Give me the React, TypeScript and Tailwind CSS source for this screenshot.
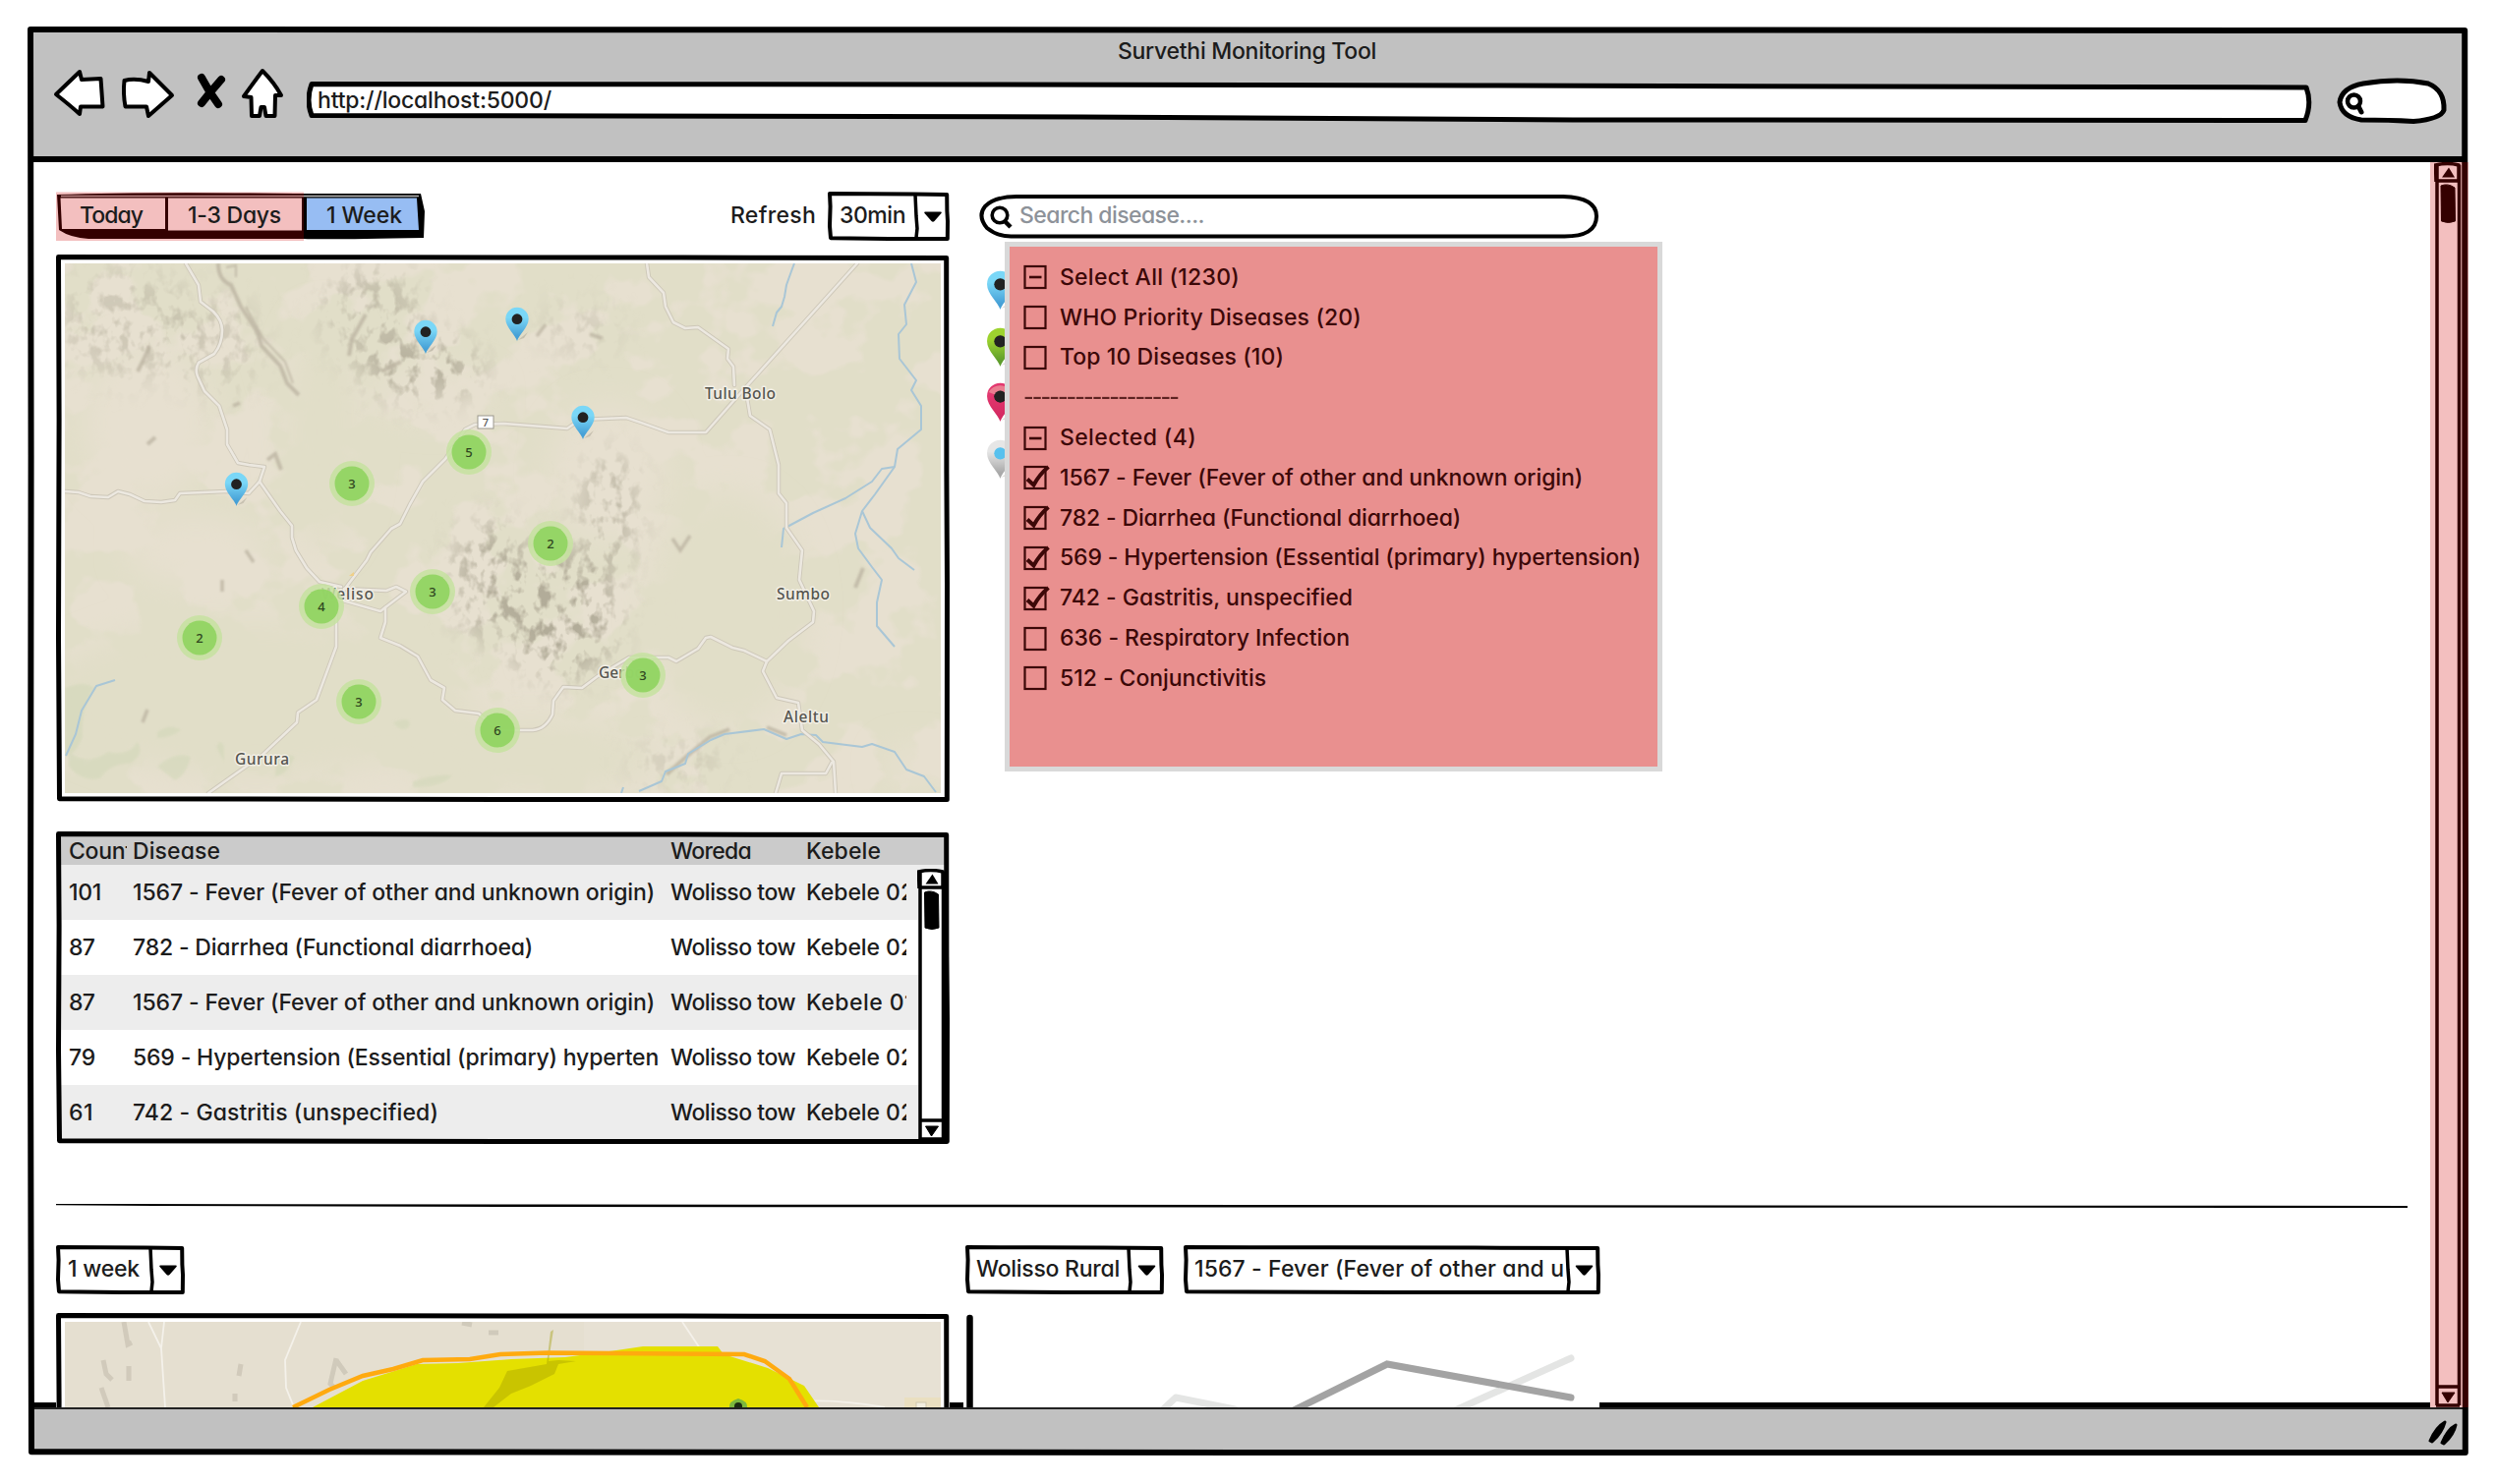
import React, { useLayoutEffect, useRef, useState } from "react";

/* Text whose tracking is adjusted so that it fills a known width. */
function Fit({ w, children, className = "" }: { w: number; children: string; className?: string }) {
  const ref = useRef<HTMLSpanElement>(null);
  const [ls, setLs] = useState(0);
  useLayoutEffect(() => {
    const el = ref.current;
    if (!el) return;
    el.style.letterSpacing = "0px";
    const natural = el.getBoundingClientRect().width;
    setLs((w - natural) / children.length);
  }, [w, children]);
  return (
    <span ref={ref} className={"inline-block whitespace-pre " + className} style={{ letterSpacing: `${ls}px` }}>
      {children}
    </span>
  );
}

/* Hand-drawn outline laid over a box of the given size. */
function Frame({ w, h, s = 5, fill = "none" }: { w: number; h: number; s?: number; fill?: string }) {
  const a = s / 2;
  const d = `M${a} ${a} L${w * 0.35} ${a + 0.3} L${w * 0.7} ${a + 0.6} L${w - a - 0.8} ${a + 1} L${w - a - 0.6} ${h * 0.4} L${w - a} ${h * 0.6} L${w - a - 0.2} ${h - a} L${w * 0.5} ${h - a} L${a + 1} ${h - a - 0.8} L${a} ${h * 0.7} L${a + 0.6} ${h * 0.3} Z`;
  return (
    <svg className="pointer-events-none absolute inset-0" width={w} height={h} viewBox={`0 0 ${w} ${h}`}>
      <path d={d} fill={fill} stroke="#000" strokeWidth={s} strokeLinejoin="round" />
    </svg>
  );
}

function Select({ w, h = 50, split, pad, text, tw }: { w: number; h?: number; split: number; pad: number; text: string; tw: number }) {
  return (
    <div className="relative shrink-0" style={{ width: w, height: h }}>
      <Frame w={w} h={h} s={4} fill="#fff" />
      <div className="relative flex h-[48px] items-center overflow-hidden" style={{ width: split - 2, paddingLeft: pad }}>
        <Fit w={tw}>{text}</Fit>
      </div>
      <svg className="absolute inset-0" width={w} height={h}>
        <path d={`M${split - 1} 3 L${split} ${h / 2} L${split + 1} ${h * 0.75} L${split} ${h - 3}`} fill="none" stroke="#000" strokeWidth="3.500" />
        <path d={`M${(split + w) / 2 - 8} 20.500 h16 q1.500 0 .5 1.500 l-7 8 q-1.500 1.500 -3 0 l-7 -8 q-1 -1.500 .5 -1.500z`} fill="#000" />
      </svg>
    </div>
  );
}

function Pin({ x, y, s = 1, c1 = "#7ad7f7", c2 = "#46a0d6", dot = "#222", id }: { x: number; y: number; s?: number; c1?: string; c2?: string; dot?: string; id: string }) {
  return (
    <g transform={`translate(${x} ${y}) scale(${s})`}>
      <defs>
        <linearGradient id={id} x1="0" y1="0" x2="0" y2="1">
          <stop offset="0.3" stopColor={c1} />
          <stop offset="0.85" stopColor={c2} />
        </linearGradient>
      </defs>
      <path d="M1 -1 L11 -9 L7 -3Z" fill="#8f8a7c" opacity=".35" />
      <path d="M0 0 C-1.500 -6 -11.700 -14 -11.700 -22.500 A11.700 11.700 0 0 1 11.700 -22.500 C11.700 -14 1.500 -6 0 0Z" fill={`url(#${id})`} />
      <circle cx="0" cy="-22.300" r="5.400" fill={dot} />
    </g>
  );
}

const roads = [
  "M189 268 L202 290 L204 307 L217 317 Q226 326 226 336 Q226 350 218 360 L202 369 Q198 376 201 383 L208 398 L223 413 L231 437 L231 452 L242 471 L253 473 L269 475 L264 490 L253 502 L230 500",
  "M66 500 L80 501 L92 505 L110 506 L120 500 L132 503 L147 510 L164 511 L178 509 L183 502 L230 500",
  "M264 490 L285 520 L297 535 L297 547 L301 560 L312 578 L325 592 L347 597",
  "M350 600 L373 570 L377 562 L398 538 L407 533 L417 513 L430 490 L453 467 L473 437 L483 432 L513 431 L577 436 L590 427 L637 425 L652 430 L680 440 L718 440 L755 398 L872 268",
  "M658 268 L660 282 L675 298 L677 312 L685 328 L697 334 L710 333 L741 355 L740 365 L746 373 L747 392",
  "M760 405 L763 423 L783 437 L792 473 L792 502 L800 512 L800 537 L816 560 L813 590 L828 622 L827 633 L802 652 L780 673 L776 683 L790 710 L812 715 L816 743 L833 757 L848 775 L850 807",
  "M846 776 L840 787 L795 787 L789 807",
  "M780 673 L757 662 L745 659 L723 648 L718 649 L710 660 L688 673 L680 669 L640 669 L608 688 L592 700 L573 699 L563 713 L562 727 Q555 742 542 743 L506 743 L487 726 L463 723 L450 712 L452 700 L438 692 L425 668 L407 657 L387 649 L392 633 L392 618 L413 602 L403 597 L393 601 L350 599",
  "M345 610 L387 622 L392 618",
  "M342 615 L342 658 L322 712 L303 725 L302 735 L267 768 L212 807",
];

const rivers = [
  "M808 268 L805 276 L800 290 L798 302 L795 312 L790 318 L786 332",
  "M927 268 L932 287 L920 310 L922 330 L914 340 L915 365 L932 387 L927 397 L937 413 L937 437 L913 457 L910 475 L890 503 L877 520 L870 543 L873 558 L887 577 L897 590 L892 613 L892 637 L910 658",
  "M910 475 L897 477 L887 490 L860 507 L827 522 L797 538 L795 557",
  "M877 520 L885 537 L907 558 L914 568 L930 580",
  "M632 807 L634 801 M650 805 L673 795 L677 785 L697 777 L700 767 L723 753 L737 747 L777 742 L800 752 L815 747 L830 748 L837 755 L877 760 L887 757 L910 765 L922 783 L940 790 L952 806",
  "M117 692 L98 698 L83 723 L77 747 L67 769",
];

const clusters: [number, number, string][] = [
  [477, 460, "5"], [358, 492, "3"], [560, 553, "2"], [440, 602, "3"], [327, 617, "4"],
  [203, 649, "2"], [365, 714, "3"], [506, 743, "6"], [654, 687, "3"],
];

const labels: [number, number, number, string][] = [
  [717, 406, 72, "Tulu Bolo"], [790, 610, 54, "Sumbo"], [327, 610, 53, "Weliso"],
  [609, 690, 46, "Gerbo"], [797, 735, 46, "Aleltu"], [239, 778, 55, "Gurura"],
];

function AreaMap() {
  return (
    <svg className="block" width="891" height="539" viewBox="66 268 891 539">
      <defs>
        <filter id="patches" x="0" y="0" width="100%" height="100%" colorInterpolationFilters="sRGB">
          <feTurbulence type="fractalNoise" baseFrequency="0.014 0.016" numOctaves="4" seed="11" />
          <feColorMatrix values="0 0 0 0 .906  0 0 0 0 .878  0 0 0 0 .816  12 0 0 0 -5.800" />
        </filter>
        <filter id="relief" x="0" y="0" width="100%" height="100%" colorInterpolationFilters="sRGB">
          <feTurbulence type="fractalNoise" baseFrequency="0.075 0.06" numOctaves="3" seed="4" />
          <feColorMatrix values="0 0 0 0 .7  0 0 0 0 .675  0 0 0 0 .6  5 0 0 0 -2.450" />
        </filter>
        <filter id="soft"><feGaussianBlur stdDeviation="16" /></filter>
        <filter id="soft2"><feGaussianBlur stdDeviation="1.200" /></filter>
        <mask id="hills">
          <g filter="url(#soft)" fill="#fff">
            <ellipse cx="130" cy="330" rx="70" ry="55" fillOpacity=".45" />
            <ellipse cx="220" cy="350" rx="45" ry="50" fillOpacity=".4" />
            <ellipse cx="380" cy="320" rx="50" ry="50" fillOpacity=".6" />
            <ellipse cx="430" cy="375" rx="60" ry="30" fillOpacity=".9" />
            <ellipse cx="570" cy="625" rx="60" ry="65" />
            <ellipse cx="500" cy="590" rx="40" ry="60" fillOpacity=".9" />
            <ellipse cx="620" cy="520" rx="30" ry="60" fillOpacity=".7" />
            <ellipse cx="590" cy="335" rx="40" ry="22" fillOpacity=".4" />
            <ellipse cx="690" cy="775" rx="50" ry="14" fillOpacity=".5" />
          </g>
        </mask>
      </defs>
      <rect x="66" y="268" width="891" height="539" fill="#e1dec8" />
      <rect x="66" y="268" width="891" height="539" filter="url(#patches)" />
      <g filter="url(#soft)" fill="#e7e0d0">
        <ellipse cx="150" cy="430" rx="65" ry="80" />
        <ellipse cx="200" cy="560" rx="70" ry="35" />
        <ellipse cx="440" cy="400" rx="60" ry="25" />
        <ellipse cx="620" cy="480" rx="60" ry="70" />
        <ellipse cx="930" cy="780" rx="30" ry="20" />
        <ellipse cx="260" cy="710" rx="220" ry="80" fill="#e1dec8" />
        <ellipse cx="740" cy="620" rx="80" ry="120" fill="#e1dec8" />
        <ellipse cx="540" cy="770" rx="130" ry="40" fill="#e1dec8" />
        <ellipse cx="330" cy="440" rx="40" ry="120" fill="#e1dec8" />
      </g>
      <g mask="url(#hills)"><rect x="66" y="268" width="891" height="539" filter="url(#relief)" /></g>
      <g fill="none" stroke="#b7af9d" filter="url(#soft2)" opacity=".7">
        <path d="M222 268 Q222 285 235 290 L245 312 L262 338 L266 352 L285 372 L292 390 L304 402" strokeWidth="4" />
        <path d="M230 272 L240 270 L240 282 M250 312 L268 345 L290 368 L298 390" strokeWidth="2" />
        <path d="M140 378 L148 362 L152 352 M150 452 L158 445 M237 413 L244 410 M272 468 L280 462 L286 478 M355 362 L358 345 L372 320 M388 378 L408 368" strokeWidth="4" />
        <path d="M546 342 L555 330 M600 340 L612 344 M684 548 L692 560 L702 545 M250 560 L258 572 M226 590 L226 602 M145 735 L150 722" strokeWidth="3.500" />
        <path d="M678 788 L698 770 L722 750 L742 742 M780 740 L800 748 M870 598 L878 578" strokeWidth="4" />
      </g>
      <g fill="#d3d8ba" opacity=".6" filter="url(#soft2)">
        <path d="M66 700 q20 -8 30 0 q-14 20 -12 50 q-8 20 -18 18z M70 765 q20 15 40 0 q20 5 30 -10 q8 12 -8 22 q-20 0 -30 15 q-18 4 -32 -12z M160 780 q18 -16 34 -10 q-4 18 -16 24z M220 760 q5 -10 8 0 v15z M280 770 q10 -5 20 0 q-10 20 -20 20z M160 745 q14 -10 24 -2 q-10 8 -24 8z M400 735 q20 -8 16 5 q-8 6 -16 -5z M420 795 q25 -8 40 -6 q-10 12 -40 12z" />
      </g>
      <g fill="none" stroke="#a9c6d6" strokeWidth="2" strokeLinejoin="round">
        {rivers.map((d) => <path key={d} d={d} />)}
      </g>
      <g fill="none" stroke="#cdc7b8" strokeWidth="4.400" strokeLinejoin="round" strokeLinecap="round">
        {roads.map((d) => <path key={d} d={d} />)}
      </g>
      <g fill="none" stroke="#ece8e0" strokeWidth="2.600" strokeLinejoin="round" strokeLinecap="round">
        {roads.map((d) => <path key={d} d={d} />)}
      </g>
      <rect x="486" y="423" width="16" height="13" fill="#fff" stroke="#9b978e" strokeWidth="1" />
      <text x="494" y="434" textAnchor="middle" className="font-['Noto_Sans']" fontSize="11" fill="#555">7</text>
      <path d="M355 586 l5 -4 l0 4z" fill="#f0cf88" />
      <g className="font-['Noto_Sans']" fontSize="15.500" fontWeight="500" fill="#55554f" stroke="#f2efe6" strokeWidth="3" paintOrder="stroke" strokeLinejoin="round">
        {labels.map(([x, y, w, t]) => <text key={t} x={x} y={y} textLength={w}>{t}</text>)}
      </g>
      {clusters.map(([x, y, n]) => (
        <g key={`${x}-${y}`}>
          <circle cx={x} cy={y} r="23" fill="#c6e2a0" fillOpacity=".85" />
          <circle cx={x} cy={y} r="17.500" fill="#8fd45f" fillOpacity=".9" />
          <text x={x} y={y + 5} textAnchor="middle" className="font-['Noto_Sans']" fontSize="13" fill="#2f4620">{n}</text>
        </g>
      ))}
      <Pin id="p1" x={433} y={360} />
      <Pin id="p2" x={526} y={347} />
      <Pin id="p3" x={593} y={447} />
      <Pin id="p4" x={240.5} y={515} />
    </svg>
  );
}

function ZoneMap() {
  return (
    <svg className="block" width="891" height="87" viewBox="66 1345 891 87">
      <rect x="66" y="1345" width="891" height="87" fill="#e5dfd0" />
      <rect x="594" y="1345" width="363" height="87" fill="#e7e1d4" />
      <g fill="none" stroke="#c3bdae" strokeWidth="5" opacity=".6">
        <path d="M126 1345 L130 1368 L134 1366 M105 1384 L108 1398 L114 1404 M103 1412 L110 1432 M131 1390 V1405 M245 1388 L243 1400 M239 1418 V1426 M470 1346 L480 1348 M497 1356 h10" />
        <path d="M342 1382 L336 1408 L340 1412 M342 1384 L352 1398" />
      </g>
      <path d="M151 1345 L164 1372 L168 1432 M167 1345 L164 1372 M306 1345 L290 1384 L291 1412 L299 1432 M694 1345 L712 1372 M790 1430 Q830 1420 900 1432" fill="none" stroke="#f4f1ea" strokeWidth="1.800" />
      <path d="M318 1432 L369 1405 L424 1388 L466 1387 L520 1383 L575 1381 L627 1374 L654 1370 L730 1370 L736 1378 L781 1392 L818 1410 L833 1432Z" fill="#e4e000" />
      <path d="M563 1353 L558 1385 L568 1384 L586 1385 L568 1388 L564 1398 L540 1410 L520 1418 L502 1432 L492 1432 L508 1412 L516 1395 L556 1388 L560 1355Z" fill="#a09b00" opacity=".4" />
      <path d="M298 1432 L335 1414 L369 1400 L400 1393 L430 1384 L478 1383 L509 1378 L557 1376.500 L757 1378 L778 1385 L803 1403 L821 1432" fill="none" stroke="#ffaa0f" strokeWidth="4.500" />
      <path d="M742 1432 Q741 1426 751 1423 Q761 1426 760 1432Z" fill="#7cb83c" />
      <circle cx="751" cy="1431" r="4" fill="#1c2c10" />
      <rect x="920" y="1422" width="37" height="10" fill="#eadfc0" />
      <rect x="932" y="1427" width="10" height="8" fill="#f3eee0" stroke="#cfc7ae" />
    </svg>
  );
}

const rows = [
  ["101", 33, "1567 - Fever (Fever of other and unknown origin)", 531, "Kebele 02"],
  ["87", 26, "782 - Diarrhea (Functional diarrhoea)", 407, "Kebele 02"],
  ["87", 26, "1567 - Fever (Fever of other and unknown origin)", 531, "Kebele 01"],
  ["79", 27, "569 - Hypertension (Essential (primary) hyperten", 535, "Kebele 02"],
  ["61", 25, "742 - Gastritis (unspecified)", 311, "Kebele 02"],
] as const;

function ScrollRail({ w, h }: { w: number; h: number }) {
  return (
    <svg className="block" width={w} height={h} viewBox={`0 0 ${w} ${h}`}>
      <rect x="2" y="2" width={w - 4} height={h - 4} fill="#fff" />
      <path d={`M2 20 L1.500 3 Q14 0 ${w - 3} 3 V20 M3 3 V${h - 2} M${w - 2.5} 3 V${h - 2} M2 19 H${w - 2} M2 ${h - 21} H${w - 2} M2 ${h - 2} H${w - 2}`} fill="none" stroke="#000" strokeWidth="3.500" />
      <path d={`M${w / 2 - 6} 15.500 L${w / 2 + 1} 5.500 L${w / 2 + 7} 15.500Z`} fill="#000" />
      <path d={`M${w / 2 - 6} ${h - 15} h13 l-7 10z`} fill="#000" stroke="#000" strokeLinejoin="round" />
      <path d={`M${w / 2 - 7} 24 q7 -3 14 2 l.5 34 q-7 3 -14 0z`} fill="#000" stroke="#000" strokeLinejoin="round" />
    </svg>
  );
}

function DiseaseTable() {
  return (
    <div className="relative mt-[30px] h-[318px] w-[909px]">
      <div className="relative h-full px-[4px] pt-[4px] pb-[4px]">
        <div className="flex h-[30px] items-center bg-[#cbcbcb] pt-[2px] pl-[9px]">
          <div className="w-[59px] shrink-0 overflow-hidden"><Fit w={65}>Count</Fit></div>
          <div className="w-[553px] shrink-0 pl-[6px]"><Fit w={89}>Disease</Fit></div>
          <div className="w-[138px] shrink-0"><Fit w={82}>Woreda</Fit></div>
          <div><Fit w={76}>Kebele</Fit></div>
        </div>
        <div className="grid h-[280px] grid-rows-5">
          {rows.map(([n, nw, d, dw, k], i) => (
            <div key={i} className="flex items-center bg-white pl-[9px] odd:bg-[#ededed]">
              <div className="w-[65px]"><Fit w={nw}>{n}</Fit></div>
              <div className="w-[535px]"><Fit w={dw}>{d}</Fit></div>
              <div className="ml-[12px] w-[128px]"><Fit w={127}>Wolisso tow</Fit></div>
              <div className="ml-[10px] w-[102px] overflow-hidden"><Fit w={110}>{k}</Fit></div>
            </div>
          ))}
        </div>
      </div>
      <div className="absolute top-[38px] right-[4px]"><ScrollRail w={29} h={277} /></div>
      <Frame w={909} h={318} />
    </div>
  );
}

type Mark = "dash" | "on" | "off";
const options: [Mark, string, number][] = [
  ["dash", "Select All (1230)", 183],
  ["off", "WHO Priority Diseases (20)", 307],
  ["off", "Top 10 Diseases (10)", 228],
  ["dash", "", 0],
  ["dash", "Selected (4)", 139],
  ["on", "1567 - Fever (Fever of other and unknown origin)", 532],
  ["on", "782 - Diarrhea (Functional diarrhoea)", 408],
  ["on", "569 - Hypertension (Essential (primary) hypertension)", 591],
  ["on", "742 - Gastritis, unspecified", 298],
  ["off", "636 - Respiratory Infection", 295],
  ["off", "512 - Conjunctivitis", 210],
];

function DiseaseMenu() {
  return (
    <div className="absolute top-[81px] left-[26px] h-[539px] w-[669px] border-[5px] border-[#d9d9d9] bg-[#e9908f] pt-[11px] pl-[14px] text-[#3c0808]">
      {options.map(([m, t, w]) =>
        t === "" ? (
          <div key="rule" className="flex h-[40.800px] items-center opacity-80"><Fit w={157}>------------------</Fit></div>
        ) : (
          <div key={t} className="flex h-[40.800px] items-center">
            <svg className="mr-[9px] shrink-0" width="28" height="28" viewBox="0 0 28 28" fill="none" stroke="currentColor">
              <rect x="1.500" y="3" width="21" height="22" strokeWidth="2.200" />
              {m === "dash" && <path d="M6 14 H18.500" strokeWidth="2.600" />}
              {m === "on" && <path d="M4 15.500 L10.500 21.500 Q16 11 25.500 3" strokeWidth="4" />}
            </svg>
            <Fit w={w}>{t}</Fit>
          </div>
        ),
      )}
    </div>
  );
}

function LegendPins() {
  return (
    <svg className="mt-[32px] ml-[7px] block" width="32" height="220" viewBox="1004.500 274 32 220">
      <Pin id="l1" x={1019} y={314} s={1.15} />
      <Pin id="l2" x={1019} y={372} s={1.15} c1="#9dd32f" c2="#5f9d2c" />
      <Pin id="l3" x={1019} y={428} s={1.15} c1="#e2386f" c2="#d42a62" />
      <path d="M1007 398 a14 14 0 0 1 24 0 q-12 6 -24 0z" fill="#ec8f98" opacity=".8" />
      <circle cx="1019" cy="402.500" r="6" fill="#222" />
      <Pin id="l4" x={1019} y={486} s={1.15} c1="#e6e6e6" c2="#a9a9a9" dot="#58c1ee" />
    </svg>
  );
}

function Toolbar() {
  return (
    <div className="flex h-[50px] items-start">
      <div className="relative h-[50px] w-[376px]">
        <svg className="absolute inset-0" width="376" height="50" viewBox="57 195 376 50">
          <path d="M58 198 Q150 195 300 197 L428 197 L432 215 L431 242 Q330 244 309 243 L90 243 Q72 242 60 234Z" fill="#000" />
          <path d="M61.500 201.500 H168 V233 H63Z M171 201.500 H307 V234.500 H171Z" fill="#fff" />
          <path d="M312 201.500 H424 L426 234 H312Z" fill="#97bdf3" />
          <path d="M62 199.500 H426" stroke="#bbb" strokeWidth="1.500" />
          <rect x="57" y="195.500" width="252" height="50" fill="#ce0000" fillOpacity=".25" />
        </svg>
        <div className="relative flex h-[48px] items-center pl-[24px]">
          <Fit w={64}>Today</Fit>
          <Fit w={95} className="ml-[46px]">1-3 Days</Fit>
          <Fit w={77} className="ml-[46px]">1 Week</Fit>
        </div>
      </div>
      <div className="ml-auto mr-[12px] flex h-[48px] items-center"><Fit w={87}>Refresh</Fit></div>
      <Select w={124} split={90} pad={12} text="30min" tw={67} />
    </div>
  );
}

function SearchBox() {
  return (
    <div className="relative h-[46px] w-[630px]">
      <svg className="absolute inset-0" width="630" height="46" viewBox="996 197 630 46">
        <path d="M1034 200 Q1060 199 1590 200 Q1624 201 1624 220 Q1624 241 1590 240.500 L1030 240.500 Q1015 241 1004 232 Q994 220 1002 210 Q1012 200 1034 200Z" fill="#fff" stroke="#000" strokeWidth="4" />
        <circle cx="1017" cy="219" r="7.800" fill="none" stroke="#000" strokeWidth="3.600" />
        <path d="M1022 225 L1028 231" stroke="#000" strokeWidth="4.500" />
      </svg>
      <div className="relative flex h-[44px] items-center pl-[41px] text-[#8d9299]"><Fit w={188}>Search disease....</Fit></div>
    </div>
  );
}

function BrowserBar() {
  return (
    <header className="relative h-[133px] border-b-[6px] border-black bg-[#c1c1c1]">
      <div className="flex h-[40px] items-center justify-center pr-[2px]"><Fit w={263}>Survethi Monitoring Tool</Fit></div>
      <div className="-mt-[4px] flex items-start pl-[19px]">
        <svg className="block" width="246" height="60" viewBox="53 68 246 60" fill="#fff" stroke="#000" strokeWidth="4" strokeLinejoin="round">
          <path d="M58 96 L82 73 L84 81 L103.500 80 L105.500 108.500 L83 108.500 L82 116 Q72 107 58 96Z" />
          <path d="M176 97 L153 74 L152 83 Q138 79 127.500 82 Q126 95 128.500 108.500 L150 108.500 L152 118Z" />
          <path d="M268 72 Q259 84 249 98 L256.500 99 L257 118 L265 118 L266.500 109 L270 109 L271.500 118 L280.500 118 L281 97 L287 97 Q280 84 268 72Z" />
          <path d="M206 79 L214 93 L223 106 M226 81 L214 95 L206 105" fill="none" strokeWidth="8" strokeLinecap="round" />
        </svg>
        <div className="relative mt-[12px] ml-[14px] h-[46px] w-[2040px]">
          <svg className="absolute inset-0" width="2040" height="46" viewBox="312 80 2040 46">
            <path d="M317 85.500 L1000 86 L1500 87 L2346 89 Q2352 105 2345 122.500 L1600 122 L1100 119 L317 117.500 Q311 102 317 85.500Z" fill="#fff" stroke="#000" strokeWidth="5" strokeLinejoin="round" />
          </svg>
          <div className="relative flex h-[44px] items-center pl-[11px]"><Fit w={238}>http://localhost:5000/</Fit></div>
        </div>
        <svg className="mt-[8px] ml-[24px] block" width="114" height="54" viewBox="2376 76 114 54">
          <path d="M2404 85 Q2440 79 2470 85 Q2487 92 2486 112 Q2483 121 2455 123.500 Q2430 122 2402 122 Q2382 119 2380 104 Q2382 89 2404 85Z" fill="#fff" stroke="#000" strokeWidth="5" />
          <circle cx="2394.500" cy="103" r="6.500" fill="none" stroke="#000" strokeWidth="4.500" />
          <path d="M2399 108 L2402 114" stroke="#000" strokeWidth="5" strokeLinecap="round" />
        </svg>
      </div>
    </header>
  );
}

function TrendChart() {
  return (
    <svg className="block" width="650" height="96" viewBox="980 1336 650 96">
      <rect x="980" y="1336" width="647" height="96" fill="#fff" />
      <path d="M1180 1437 L1196 1422 L1256 1434 M1478 1436 L1598 1382" fill="none" stroke="#e4e5e4" strokeWidth="7" strokeLinejoin="round" strokeLinecap="round" />
      <path d="M1312 1437 L1411 1388 L1598 1422" fill="none" stroke="#a3a3a3" strokeWidth="7" strokeLinecap="round" />
      <path d="M986.500 1341 V1432" stroke="#000" strokeWidth="6.500" strokeLinecap="round" />
    </svg>
  );
}

export default function App() {
  return (
    <div className="h-[1510px] w-[2539px] overflow-hidden bg-white pt-[27px] pl-[28px] font-['Inter','Liberation_Sans',sans-serif] text-[23px] leading-[29px] font-medium text-[#1c1c1c] [font-feature-settings:'cv11']">
      <div className="relative h-[1454px] w-[2483px] p-[5px]">
        <BrowserBar />
        <div className="flex h-[1267px] bg-white">
          <div className="relative h-full w-[2439px] overflow-hidden pl-[24px]">
            <section className="flex">
              <div className="w-[909px] pt-[30px]">
                <Toolbar />
                <div className="relative mt-[14px] h-[557px] w-[909px] bg-white p-[9px]">
                  <AreaMap />
                  <Frame w={909} h={557} />
                </div>
                <DiseaseTable />
              </div>
              <div className="relative ml-[30px] pt-[32px]">
                <SearchBox />
                <LegendPins />
                <DiseaseMenu />
              </div>
            </section>
            <svg className="mt-[60px] block" width="2392" height="6" viewBox="0 0 2392 6">
              <path d="M0 1 L60 1 L500 1.500 L2392 3 L2392 5 L1200 4.500 L500 4 L100 3 L0 2.200Z" fill="#000" />
            </svg>
            <div className="mt-[37px] flex">
              <Select w={131} split={97} pad={12} text="1 week" tw={73} />
              <div className="ml-[794px]"><Select w={202} split={167} pad={11} text="Wolisso Rural" tw={146} /></div>
              <div className="ml-[20px]"><Select w={424} split={391} pad={11} text="1567 - Fever (Fever of other and u" tw={376} /></div>
            </div>
            <div className="mt-[19px] flex">
              <div className="relative z-10 h-[96px] w-[909px] overflow-hidden bg-white p-[9px]">
                <ZoneMap />
                <Frame w={909} h={300} />
              </div>
              <div className="relative z-10 ml-[14px]"><TrendChart /></div>
            </div>
            <div className="absolute bottom-0 left-0 h-[5px] w-full bg-black" />
          </div>
          <div className="relative w-[34px]">
            <div className="absolute top-0 left-[4px]"><ScrollRail w={28} h={1267} /></div>
          </div>
        </div>
        <footer className="relative flex h-[44px] justify-end border-t-2 border-[#222] bg-[#c1c1c1] pr-[2px]">
          <svg className="mt-[8px] block" width="36" height="34" viewBox="2470 1442 36 34">
            <path d="M2474 1466 Q2480 1452 2489 1447 Q2486 1458 2476 1467Z M2486 1468 Q2492 1454 2500 1450 Q2498 1460 2488 1469Z" fill="#000" stroke="#000" strokeWidth="3" strokeLinejoin="round" />
          </svg>
        </footer>
        <Frame w={2483} h={1454} s={6} />
        <div className="absolute top-[138px] right-0 h-[1267px] w-[39px] bg-[#ce0000]/25" />
      </div>
    </div>
  );
}
